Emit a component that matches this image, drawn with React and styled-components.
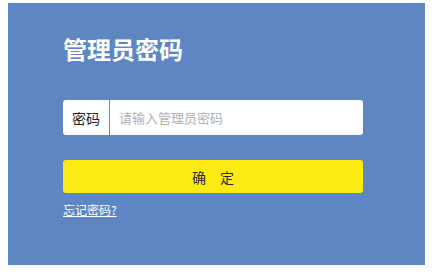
import React from "react";
import styled, { createGlobalStyle } from "styled-components";

const Global = createGlobalStyle`
  html, body { margin: 0; padding: 0; background: #ffffff; }
  body { font-family: "Noto Sans CJK SC", "Noto Sans", sans-serif; }
`;

const Panel = styled.div`
  box-sizing: border-box;
  width: 417px;
  height: 262px;
  margin: 3px 0 0 8px;
  background: #5e86c3;
  padding: 34px 0 0 55px;
  display: flex;
  flex-direction: column;
`;

const Title = styled.h1`
  margin: 0;
  font-size: 24px;
  line-height: 24px;
  font-weight: 700;
  color: #ffffff;
`;

const Field = styled.div`
  margin-top: 39px;
  width: 300px;
  height: 35px;
  display: flex;
  background: #ffffff;
  border-radius: 3px;
  overflow: hidden;
`;

const Label = styled.span`
  width: 46px;
  flex: none;
  display: flex;
  align-items: center;
  justify-content: center;
  font-size: 14px;
  color: #222222;
  border-right: 1px solid #5e86c3;
`;

const Input = styled.input`
  flex: 1;
  border: none;
  outline: none;
  padding: 0 0 0 9px;
  font-family: inherit;
  font-size: 13px;
  color: #333;
  background: transparent;
  &::placeholder { color: #b0b0b0; }
`;

const Button = styled.button`
  margin-top: 25px;
  width: 300px;
  height: 33px;
  border: none;
  border-radius: 3px;
  background: #fbeb12;
  color: #2b2b2b;
  font-family: inherit;
  font-size: 14px;
  padding: 0;
  cursor: pointer;
`;

const Link = styled.a`
  margin-top: 9px;
  align-self: flex-start;
  font-size: 12px;
  line-height: 16px;
  color: #ffffff;
  text-decoration: underline;
  cursor: pointer;
`;

export default function App() {
  return (
    <>
      <Global />
      <Panel>
        <Title>管理员密码</Title>
        <Field>
          <Label>密码</Label>
          <Input type="password" placeholder="请输入管理员密码" />
        </Field>
        <Button>确&emsp;定</Button>
        <Link>忘记密码?</Link>
      </Panel>
    </>
  );
}
